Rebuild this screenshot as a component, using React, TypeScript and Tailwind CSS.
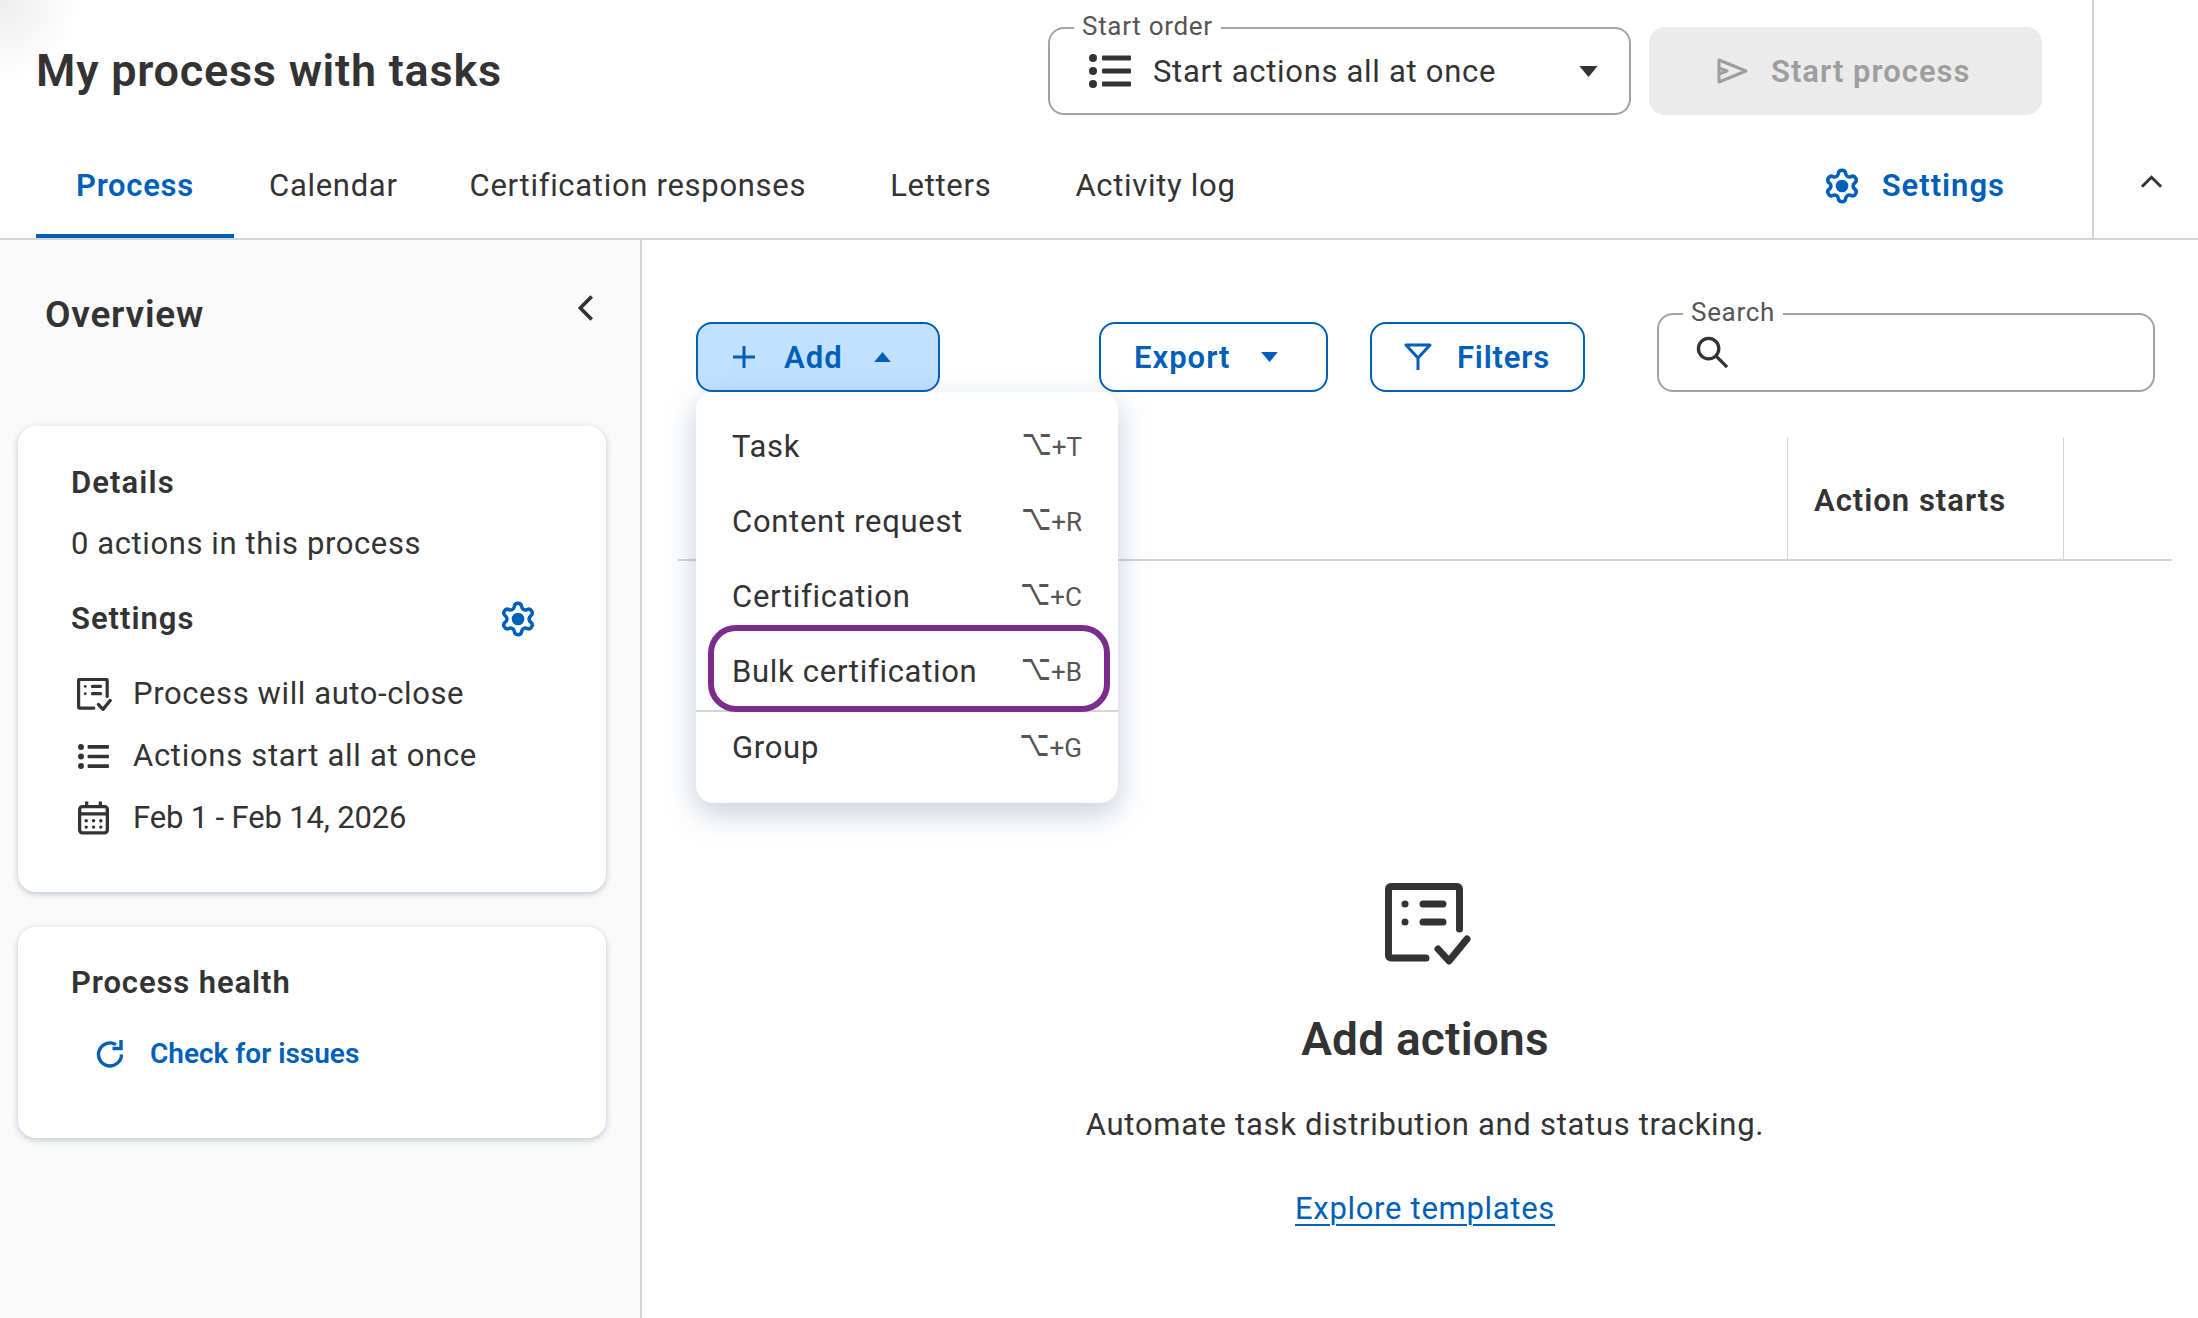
const blue = "#005fb8";

function Gear({ className }: { className: string }) {
  return (
    <svg viewBox="0 0 24 24" fill="none" stroke={blue} strokeWidth="2.2" className={className}>
      <path d="M9.671 4.136a2.34 2.34 0 0 1 4.659 0 2.34 2.34 0 0 0 3.319 1.915 2.34 2.34 0 0 1 2.33 4.033 2.34 2.34 0 0 0 0 3.831 2.34 2.34 0 0 1-2.33 4.033 2.34 2.34 0 0 0-3.319 1.915 2.34 2.34 0 0 1-4.659 0 2.34 2.34 0 0 0-3.32-1.915 2.34 2.34 0 0 1-2.33-4.033 2.34 2.34 0 0 0 0-3.831A2.34 2.34 0 0 1 6.35 6.051a2.34 2.34 0 0 0 3.319-1.915" />
      <circle cx="12" cy="12" r="4" fill={blue} stroke="none" />
    </svg>
  );
}

function ListIcon({ className }: { className: string }) {
  return (
    <svg viewBox="0 0 42 34" className={className} fill="#333">
      <circle cx="4" cy="4" r="4" />
      <circle cx="4" cy="17" r="4" />
      <circle cx="4" cy="30" r="4" />
      <rect x="13" y="1.5" width="29" height="5" rx="1" />
      <rect x="13" y="14.5" width="29" height="5" rx="1" />
      <rect x="13" y="27.5" width="29" height="5" rx="1" />
    </svg>
  );
}

function TaskListIcon({ className, weight = 7 }: { className: string; weight?: number }) {
  return (
    <svg viewBox="0 0 86 82" fill="none" stroke="#333" strokeWidth={weight} strokeLinecap="round" strokeLinejoin="round" className={className}>
      <path d="M41 75H6a2.5 2.5 0 0 1-2.5-2.5V6A2.5 2.5 0 0 1 6 3.5H72A2.5 2.5 0 0 1 74.5 6V46" />
      <path d="M53 66l11 12 18-22" />
      <path d="M38 21H58M38 39H58" />
      <circle cx="20" cy="21" r="3.5" fill="#333" stroke="none" />
      <circle cx="20" cy="39" r="3.5" fill="#333" stroke="none" />
    </svg>
  );
}

function CalendarIcon({ className }: { className: string }) {
  return (
    <svg viewBox="0 0 34 36" fill="none" stroke="#333" strokeWidth="3.6" className={className}>
      <rect x="1.8" y="5.5" width="30.4" height="28.7" rx="3" />
      <path d="M1.8 13.5H32.2M9.5 0V6M24.5 0V6" />
      <g fill="#333" stroke="none">
        <circle cx="9" cy="21" r="1.9" /><circle cx="17" cy="21" r="1.9" /><circle cx="25" cy="21" r="1.9" />
        <circle cx="9" cy="28" r="1.9" /><circle cx="17" cy="28" r="1.9" /><circle cx="25" cy="28" r="1.9" />
      </g>
    </svg>
  );
}

function Caret({ up, className }: { up?: boolean; className: string }) {
  return (
    <svg viewBox="0 0 20 12" className={className}>
      <path d={up ? "M10 0L20 12H0z" : "M0 0H20L10 12z"} fill="currentColor" />
    </svg>
  );
}

const menuItems = [
  { label: "Task", key: "T" },
  { label: "Content request", key: "R" },
  { label: "Certification", key: "C" },
  { label: "Bulk certification", key: "B" },
];

function Shortcut({ k }: { k: string }) {
  return (
    <span className="text-[26px] tracking-normal text-[#555]">
      <span className="inline-block origin-[50%_78%] scale-y-[1.4] font-['DejaVu_Sans',sans-serif]">⌥</span>+{k}
    </span>
  );
}

export default function App() {
  return (
    <div className="relative flex h-[1318px] w-[2198px] flex-col overflow-hidden bg-white font-['Roboto',sans-serif] text-[31px] tracking-[0.7px] text-[#333]">
      <div className="absolute left-0 top-0 h-[80px] w-[80px] bg-[radial-gradient(circle_at_top_left,#ececec,#ffffff_70%)]" />

      {/* Header */}
      <header className="relative flex h-[240px] border-b-2 border-[#d4d4d4]">
        <div className="flex w-[2094px] flex-col border-r-2 border-[#d4d4d4]">
          <div className="flex h-[142px] items-start">
            <h1 className="ml-[36px] mt-[43px] w-[464px] whitespace-nowrap text-[45px] font-semibold leading-[56px] tracking-[0.75px]">My process with tasks</h1>
            <div className="relative ml-[548px] mt-[27px] flex h-[88px] w-[583px] items-center rounded-[16px] border-2 border-[#a3a3a3] pl-[39px]">
              <span className="absolute left-[24px] top-[-20px] bg-white px-[8px] text-[26px] leading-[34px] tracking-[0.7px] text-[#555]">Start order</span>
              <ListIcon className="h-[34px] w-[42px]" />
              <span className="ml-[22px] pt-[2px]">Start actions all at once</span>
              <Caret className="absolute right-[31px] top-[37px] h-[11px] w-[19px] text-[#333]" />
            </div>
            <button className="ml-[18px] mt-[27px] flex h-[88px] w-[393px] items-center rounded-[16px] bg-[#ebebeb] pl-[67px] font-semibold tracking-[1px] text-[#9e9e9e]">
              <svg viewBox="0 0 32 26" fill="none" stroke="#9e9e9e" strokeWidth="3" strokeLinejoin="round" className="h-[26px] w-[32px]">
                <path d="M3 2L30 13 3 24z" />
                <path d="M3 10L11 13 3 16" />
              </svg>
              <span className="ml-[23px] pt-[2px]">Start process</span>
            </button>
          </div>
          <nav className="flex h-[96px] items-stretch">
            <a className="ml-[36px] flex w-[198px] items-center justify-center border-b-4 border-[#005fb8] pb-[3px] font-semibold text-[#005fb8]">Process</a>
            <a className="ml-[35px] flex items-center pb-[8px]">Calendar</a>
            <a className="ml-[72px] flex items-center pb-[8px]">Certification responses</a>
            <a className="ml-[84px] flex items-center pb-[8px]">Letters</a>
            <a className="ml-[84px] flex items-center pb-[8px]">Activity log</a>
            <a className="ml-auto mr-[87px] flex items-center pb-[8px] font-semibold tracking-[1px] text-[#005fb8]">
              <Gear className="h-[38px] w-[38px]" />
              <span className="ml-[21px]">Settings</span>
            </a>
          </nav>
        </div>
        <div className="flex flex-1 justify-center pl-[10px] pt-[175px]">
          <svg viewBox="0 0 24 14" fill="none" stroke="#333" strokeWidth="3" className="h-[14px] w-[23px]">
            <path d="M2 12L12 2l10 10" />
          </svg>
        </div>
      </header>

      <div className="flex flex-1">
        {/* Sidebar */}
        <aside className="w-[642px] shrink-0 border-r-2 border-[#d4d4d4] bg-[#fafafa] pl-[18px]">
          <div className="flex h-[186px] items-start justify-between pt-[53px]">
            <h2 className="ml-[27px] text-[37px] font-semibold leading-[44px] tracking-[0.8px]">Overview</h2>
            <svg viewBox="0 0 14 24" fill="none" stroke="#333" strokeWidth="3.2" className="mr-[46px] mt-[1px] h-[28px] w-[16px]">
              <path d="M12 2L2 12l10 10" />
            </svg>
          </div>

          <section className="w-[588px] rounded-[18px] bg-white pb-[43px] pl-[53px] pr-[69px] pt-[35px] shadow-[0_2px_6px_rgba(100,115,150,0.4)]">
            <h3 className="font-semibold leading-[44px] tracking-[1.1px]">Details</h3>
            <p className="mt-[17px] leading-[44px] tracking-[0.6px]">0 actions in this process</p>
            <div className="mt-[31px] flex items-center justify-between leading-[44px]">
              <h3 className="font-semibold tracking-[1px]">Settings</h3>
              <Gear className="h-[38px] w-[38px]" />
            </div>
            <ul className="mt-[22px]">
              <li className="flex h-[62px] items-center tracking-[0.6px]">
                <TaskListIcon weight={8} className="ml-[6px] h-[33px] w-[35px]" />
                <span className="ml-[21px]">Process will auto-close</span>
              </li>
              <li className="flex h-[62px] items-center">
                <ListIcon className="ml-[7px] h-[25px] w-[31px]" />
                <span className="ml-[24px]">Actions start all at once</span>
              </li>
              <li className="flex h-[62px] items-center tracking-[-0.15px]">
                <CalendarIcon className="ml-[7px] h-[36px] w-[31px]" />
                <span className="ml-[24px]">Feb 1 - Feb 14, 2026</span>
              </li>
            </ul>
          </section>

          <section className="mt-[35px] w-[588px] rounded-[18px] bg-white pb-[62px] pl-[53px] pt-[34px] shadow-[0_2px_6px_rgba(100,115,150,0.4)]">
            <h3 className="font-semibold leading-[44px] tracking-[0.9px]">Process health</h3>
            <div className="mt-[27px] flex h-[44px] items-center pl-[25px] text-[#005fb8]">
              <svg viewBox="0 0 28 30" fill="none" stroke={blue} strokeWidth="3.4" className="h-[30px] w-[28px]">
                <path d="M25.5 15.5A11.5 11.5 0 1 1 20 5.6" />
                <path d="M25 1V9.5H16.5" />
              </svg>
              <span className="ml-[26px] text-[28px] font-semibold tracking-normal">Check for issues</span>
            </div>
          </section>
        </aside>

        {/* Main */}
        <main className="relative min-w-0 flex-1">
          <div className="flex items-end pl-[54px] pt-[73px]">
            <button className="flex h-[70px] w-[244px] items-center rounded-[16px] border-2 border-[#005fb8] bg-[#c2e1ff] pl-[35px] font-semibold tracking-[1px] text-[#005fb8]">
              <svg viewBox="0 0 22 22" stroke={blue} strokeWidth="3" className="h-[22px] w-[22px]">
                <path d="M11 0V22M0 11H22" />
              </svg>
              <span className="ml-[29px] pt-[2px]">Add</span>
              <Caret up className="ml-[31px] h-[10px] w-[17px]" />
            </button>
            <button className="ml-[159px] flex h-[70px] w-[229px] items-center rounded-[16px] border-2 border-[#005fb8] pl-[33px] font-semibold tracking-[1px] text-[#005fb8]">
              <span className="pt-[2px]">Export</span>
              <Caret className="ml-[31px] h-[10px] w-[17px]" />
            </button>
            <button className="ml-[42px] flex h-[70px] w-[215px] items-center rounded-[16px] border-2 border-[#005fb8] pl-[32px] font-semibold tracking-[0.8px] text-[#005fb8]">
              <svg viewBox="0 0 28 28" fill="none" stroke={blue} strokeWidth="3" strokeLinejoin="round" className="h-[28px] w-[28px]">
                <path d="M2 2H26L14 15zM14 15V27" />
              </svg>
              <span className="ml-[25px] pt-[2px]">Filters</span>
            </button>
            <div className="relative ml-[72px] flex h-[79px] w-[498px] items-center rounded-[16px] border-2 border-[#a3a3a3] pl-[37px]">
              <span className="absolute left-[24px] top-[-20px] bg-white px-[8px] text-[26px] leading-[34px] tracking-[0.7px] text-[#555]">Search</span>
              <svg viewBox="0 0 34 34" fill="none" stroke="#333" strokeWidth="3.4" className="h-[33px] w-[33px]">
                <circle cx="13" cy="13" r="10.5" />
                <path d="M21 21L32 32" />
              </svg>
            </div>
          </div>

          <div className="ml-[36px] mt-[46px] flex h-[123px] w-[1494px] justify-end border-b-2 border-[#d4d4d4] pr-[108px]">
            <div className="flex w-[277px] items-center border-x border-[#d4d4d4] pl-[26px] pt-[5px] font-semibold tracking-[1px]">Action starts</div>
          </div>

          <div className="flex flex-col items-center pl-[10px] pt-[322px]">
            <TaskListIcon className="ml-[6px] h-[82px] w-[86px]" />
            <h2 className="mt-[46px] text-[46px] font-semibold leading-[56px] tracking-[0.2px]">Add actions</h2>
            <p className="mt-[36px] leading-[44px]">Automate task distribution and status tracking.</p>
            <a className="mt-[40px] leading-[44px] text-[#005fb8] underline decoration-2 underline-offset-[5px]">Explore templates</a>
          </div>

          {/* Add menu */}
          <div className="absolute left-[54px] top-[152px] w-[422px] rounded-[18px] bg-white pb-[18px] pt-[18px] shadow-[0_10px_30px_rgba(90,110,150,0.35)]">
            {menuItems.map((item) => (
              <div key={item.key} className="flex h-[75px] items-center justify-between px-[36px]">
                <span>{item.label}</span>
                <Shortcut k={item.key} />
              </div>
            ))}
            <div className="flex h-[75px] items-center justify-between border-t-2 border-[#d4d4d4] px-[36px]">
              <span>Group</span>
              <Shortcut k="G" />
            </div>
            <div className="absolute left-[12px] top-[233px] h-[87px] w-[402px] rounded-[28px] border-[6px] border-[#7b2d8e]" />
          </div>
        </main>
      </div>
    </div>
  );
}
